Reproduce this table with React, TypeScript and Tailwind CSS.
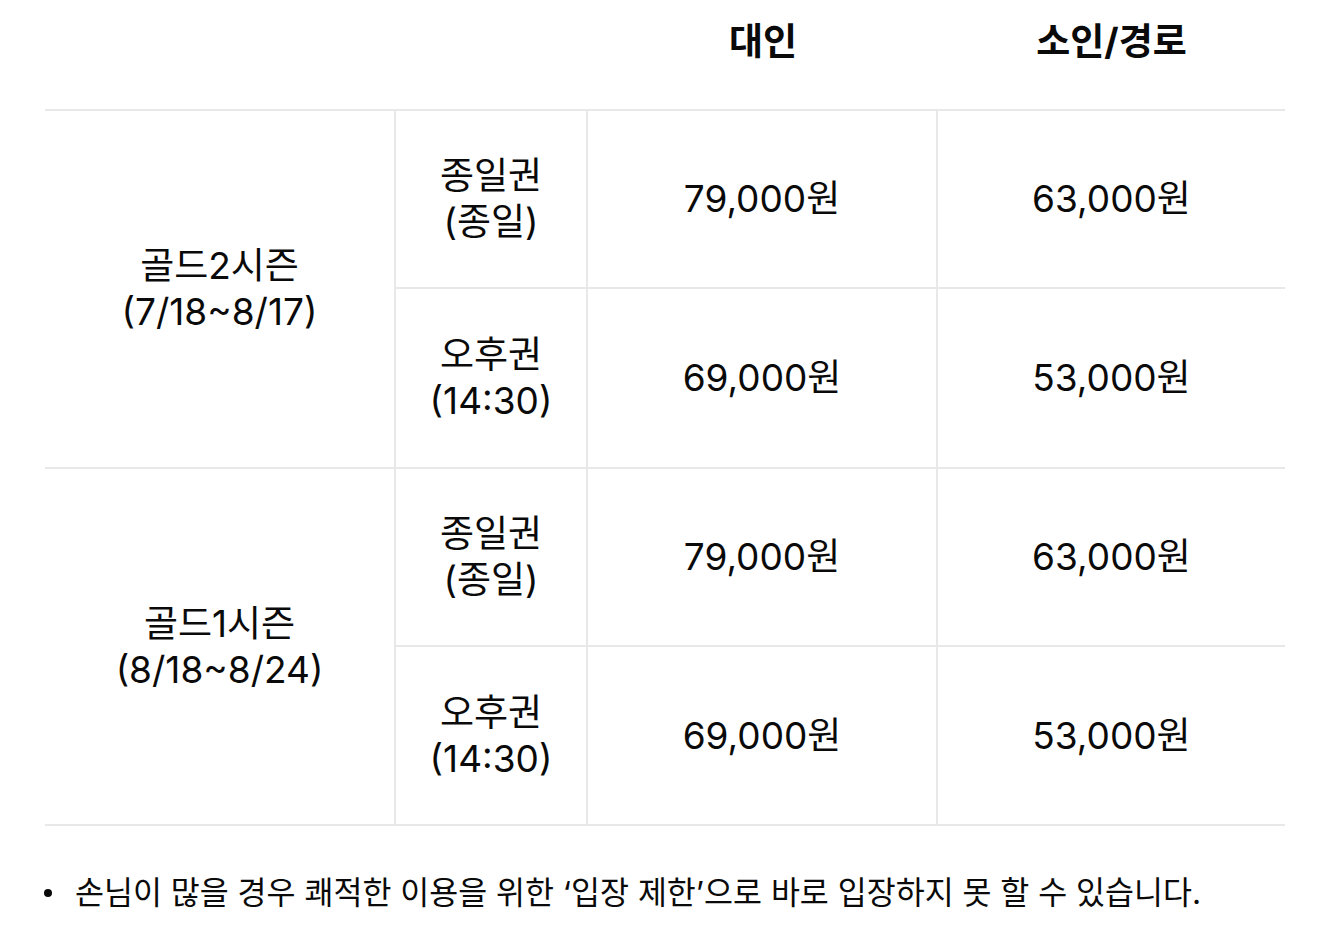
const FONT = { fontFamily: '"Inter", "Noto Sans CJK KR", sans-serif' };

type Ticket = { name: string; time: string; adult: string; child: string };
type Season = { title: string; period: string; tickets: Ticket[] };

const seasons: Season[] = [
  {
    title: "골드2시즌",
    period: "(7/18~8/17)",
    tickets: [
      { name: "종일권", time: "(종일)", adult: "79,000원", child: "63,000원" },
      { name: "오후권", time: "(14:30)", adult: "69,000원", child: "53,000원" },
    ],
  },
  {
    title: "골드1시즌",
    period: "(8/18~8/24)",
    tickets: [
      { name: "종일권", time: "(종일)", adult: "79,000원", child: "63,000원" },
      { name: "오후권", time: "(14:30)", adult: "69,000원", child: "53,000원" },
    ],
  },
];

export default function App() {
  return (
    <div className="min-h-[946px] bg-white text-[#0a0a0a]" style={FONT}>
      <div className="ml-[45px] w-[1240px]">
        {/* header */}
        <div className="flex h-[111px] border-b-2 border-[#e8e8e8] pb-[25px]">
          <div className="w-[543px]" />
          <div className="flex w-[350px] items-center justify-center text-[37px] font-bold">대인</div>
          <div className="flex flex-1 items-center justify-center text-[37px] font-bold">소인/경로</div>
        </div>

        {seasons.map((s, si) => (
          <div key={s.title} className="flex border-b-2 border-[#e8e8e8]">
            <div className="flex w-[351px] flex-col items-center justify-center border-r-2 border-[#e8e8e8] text-[37px] leading-[46px]">
              <span>{s.title}</span>
              <span>{s.period}</span>
            </div>
            <div className="flex flex-1 flex-col">
              {s.tickets.map((t, i) => (
                <div
                  key={t.name}
                  className={`flex ${si === 1 && i === 1 ? "h-[177px]" : "h-[178px]"} ${i === 0 ? "border-b-2 border-[#e8e8e8]" : ""}`}
                >
                  <div className="flex w-[192px] flex-col items-center justify-center border-r-2 border-[#e8e8e8] text-[37px] leading-[46px]">
                    <span>{t.name}</span>
                    <span>{t.time}</span>
                  </div>
                  <div className="flex w-[350px] items-center justify-center border-r-2 border-[#e8e8e8] text-[37px]">
                    {t.adult}
                  </div>
                  <div className="flex flex-1 items-center justify-center text-[37px]">{t.child}</div>
                </div>
              ))}
            </div>
          </div>
        ))}

        <ul className="mt-[45px] text-[31.5px] leading-[44px]">
          <li className="flex items-center">
            <span className="ml-[-1px] mr-[23px] h-[8px] w-[8px] rounded-full bg-[#0a0a0a]" />
            <span>손님이 많을 경우 쾌적한 이용을 위한 ‘입장 제한’으로 바로 입장하지 못 할 수 있습니다.</span>
          </li>
        </ul>
      </div>
    </div>
  );
}
